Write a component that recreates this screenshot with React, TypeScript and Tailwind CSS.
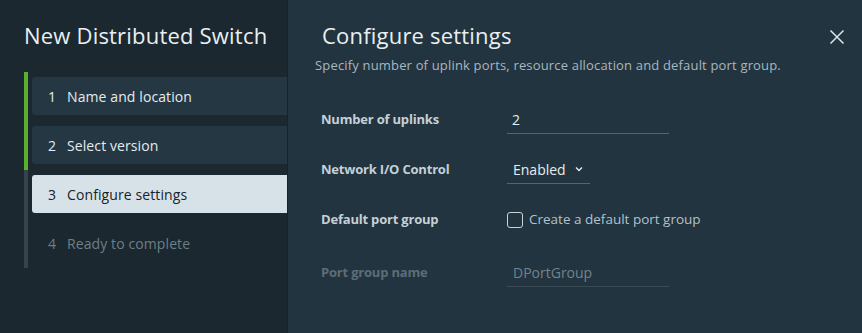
const steps = [
  { n: 1, label: "Name and location", state: "done" },
  { n: 2, label: "Select version", state: "done" },
  { n: 3, label: "Configure settings", state: "current" },
  { n: 4, label: "Ready to complete", state: "todo" },
];

const App = () => {
  return (
    <div
      className="flex w-[862px] h-[333px] overflow-hidden"
      style={{ fontFamily: "'Open Sans', 'Noto Sans', sans-serif" }}
    >
      {/* wizard nav */}
      <div className="w-[288px] shrink-0 bg-[#1b2830] border-r border-[#17232a]">
        <h2 className="pl-6 pt-[21px] text-[22px] leading-[28px] tracking-[0.2px] text-[#e9eff2]">
          New Distributed Switch
        </h2>
        <div className="flex mt-[23px] ml-6">
          <div className="flex flex-col w-1">
            <div className="h-[98px] bg-[#5aaf2f]" />
            <div className="h-[98px] bg-[#35444c]" />
          </div>
          <ul className="flex-1 pl-1 pt-[5px] space-y-[11px]">
            {steps.map((s) => (
              <li
                key={s.n}
                className={
                  s.state === "current"
                    ? "flex items-center h-[38px] rounded-l-[3px] bg-[#d7e2e8] text-[#17232a]"
                    : s.state === "done"
                    ? "flex items-center h-[38px] rounded-l-[3px] bg-[#243743] text-[#e4ebee]"
                    : "flex items-center h-[38px] text-[#6f7e86]"
                }
              >
                <span className="w-[35px] pl-4 text-[14px]">{s.n}</span>
                <span className="text-[14px] tracking-[0.1px]">{s.label}</span>
              </li>
            ))}
          </ul>
        </div>
      </div>

      {/* content */}
      <div className="flex-1 bg-[#22343f] pl-[27px] pr-4">
        <div className="flex items-start justify-between pt-[21px]">
          <h3 className="pl-[7px] text-[22px] leading-[28px] tracking-[0.2px] text-[#e9eff2]">Configure settings</h3>
          <button className="mt-[8px] mr-[1px] text-[#dde5ea]">
            <svg width="16" height="16" viewBox="0 0 16 16" fill="none" stroke="currentColor" strokeWidth="1.5">
              <path d="M1.5 1.5 L14.5 14.5 M14.5 1.5 L1.5 14.5" />
            </svg>
          </button>
        </div>
        <p className="mt-[7px] text-[13px] tracking-[0.17px] text-[#a9b7bf]">
          Specify number of uplink ports, resource allocation and default port group.
        </p>

        <div className="mt-[19px] pl-[6px] text-[13px]">
          <div className="flex items-center h-[50px]">
            <label className="w-[186px] font-bold tracking-[-0.2px] text-[#c5d0d6]">Number of uplinks</label>
            <div className="w-[162px] h-[28px] flex items-center border-b border-[#55656e] pl-[5px] text-[14px] text-[#e6edf0]">
              2
            </div>
          </div>
          <div className="flex items-center h-[50px]">
            <label className="w-[186px] font-bold tracking-[-0.2px] text-[#c5d0d6]">Network I/O Control</label>
            <div className="w-[83px] h-[28px] flex items-center border-b border-[#55656e] pl-[6px] text-[14px] text-[#e6edf0]">
              Enabled
              <svg className="ml-[8px]" width="10" height="10" viewBox="0 0 10 10" fill="none" stroke="currentColor" strokeWidth="1.4">
                <path d="M2 3.5 L5 6.5 L8 3.5" />
              </svg>
            </div>
          </div>
          <div className="flex items-center h-[50px]">
            <label className="w-[186px] font-bold tracking-[-0.2px] text-[#c5d0d6]">Default port group</label>
            <div className="flex items-center gap-[6px]">
              <span className="w-4 h-4 rounded-[3px] border border-[#c9d3d8]" />
              <span className="text-[13.5px] text-[#b4c1c8]">Create a default port group</span>
            </div>
          </div>
          <div className="flex items-center h-[56px]">
            <label className="w-[186px] font-bold tracking-[-0.2px] text-[#5d6d76]">Port group name</label>
            <div className="w-[162px] h-[28px] flex items-center border-b border-[#3a4a53] pl-[6px] text-[14px] text-[#73838c]">
              DPortGroup
            </div>
          </div>
        </div>
      </div>
    </div>
  );
};

export default App;
